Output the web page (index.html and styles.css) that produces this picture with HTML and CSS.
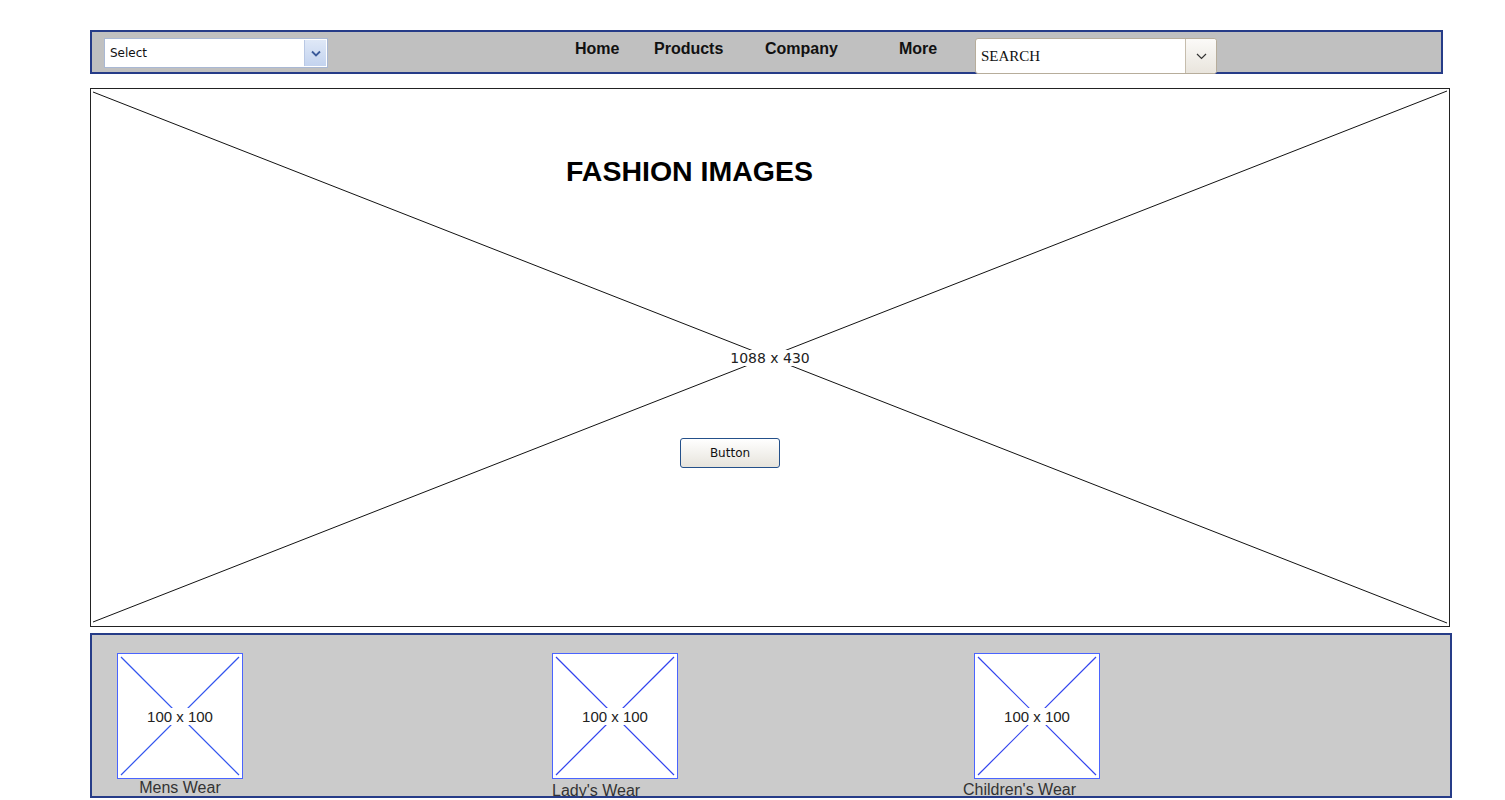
FILE: index.html
```html
<!DOCTYPE html>
<html lang="en">
<head>
    <meta charset="UTF-8">
    <meta name="viewport" content="width=device-width, initial-scale=1.0">
    <title>Fashion</title>
    <link rel="stylesheet" href="styles.css">
</head>
<body>

<div class="page">

    <div class="topbar">
        <div class="select">
            <span class="select-text">Select</span>
            <span class="select-btn">
                <svg width="10" height="7" viewBox="0 0 10 7"><path d="M1 1.5 L5 5.5 L9 1.5" fill="none" stroke="#3a5a9a" stroke-width="1.8"/></svg>
            </span>
        </div>
        <ul class="menu">
            <li class="menu-home">Home</li>
            <li class="menu-products">Products</li>
            <li class="menu-company">Company</li>
            <li class="menu-more">More</li>
        </ul>
        <div class="search">
            <span class="search-text">SEARCH</span>
            <span class="search-btn">
                <svg width="11" height="7" viewBox="0 0 11 7"><path d="M1 1 L5.5 5.5 L10 1" fill="none" stroke="#333" stroke-width="1.2"/></svg>
            </span>
        </div>
    </div>

    <div class="hero">
        <svg class="cross" viewBox="0 0 1358 537" preserveAspectRatio="none">
            <line x1="2" y1="3" x2="1356" y2="534" stroke="#111" stroke-width="1"/>
            <line x1="1356" y1="2" x2="2" y2="533" stroke="#111" stroke-width="1"/>
        </svg>
        <h1 class="hero-title">FASHION IMAGES</h1>
        <span class="hero-size">1088 x 430</span>
        <button class="hero-button">Button</button>
    </div>

    <div class="categories">
        <div class="cat cat-mens">
            <div class="thumb">
                <svg class="cross" viewBox="0 0 124 124" preserveAspectRatio="none">
                    <line x1="3" y1="3" x2="121" y2="121" stroke="#3355ee" stroke-width="1.2"/>
                    <line x1="121" y1="3" x2="3" y2="121" stroke="#3355ee" stroke-width="1.2"/>
                </svg>
                <span class="thumb-size">100 x 100</span>
            </div>
            <p class="cat-label">Mens Wear</p>
        </div>
        <div class="cat cat-lady">
            <div class="thumb">
                <svg class="cross" viewBox="0 0 124 124" preserveAspectRatio="none">
                    <line x1="3" y1="3" x2="121" y2="121" stroke="#3344ee" stroke-width="1.2"/>
                    <line x1="121" y1="3" x2="3" y2="121" stroke="#3344ee" stroke-width="1.2"/>
                </svg>
                <span class="thumb-size">100 x 100</span>
            </div>
            <p class="cat-label">Lady's Wear</p>
        </div>
        <div class="cat cat-kids">
            <div class="thumb">
                <svg class="cross" viewBox="0 0 124 124" preserveAspectRatio="none">
                    <line x1="3" y1="3" x2="121" y2="121" stroke="#3344ee" stroke-width="1.2"/>
                    <line x1="121" y1="3" x2="3" y2="121" stroke="#3344ee" stroke-width="1.2"/>
                </svg>
                <span class="thumb-size">100 x 100</span>
            </div>
            <p class="cat-label">Children's Wear</p>
        </div>
    </div>

</div>

</body>
</html>
```

FILE: styles.css
```css
body {
    margin: 0;
    background-color: #ffffff;
    font-family: "Liberation Sans", Arial, sans-serif;
    overflow: hidden;
}
.page {
    padding: 30px 0 0 90px;
    width: 1362px;
}

/* top bar */
.topbar {
    display: flex;
    align-items: flex-start;
    width: 1349px;
    height: 40px;
    background-color: #c0c0c0;
    border: 2px solid #263c88;
}
.select {
    display: flex;
    align-items: center;
    box-sizing: border-box;
    width: 224px;
    height: 30px;
    margin: 6px 0 0 12px;
    background: #fff;
    border: 1px solid #a9b8d4;
    padding: 1px;
}
.select-text {
    flex: 1;
    padding-left: 4px;
    font-family: "DejaVu Sans", Tahoma, sans-serif;
    font-size: 12px;
    color: #111;
}
.select-btn {
    display: flex;
    align-items: center;
    justify-content: center;
    width: 21px;
    height: 26px;
    background: linear-gradient(#dfe8f7, #c3d3ef);
    border-left: 1px solid #b9c8e4;
}
.menu {
    display: flex;
    list-style: none;
    margin: 8px 0 0 247px;
    padding: 0;
    font-size: 16px;
    font-weight: bold;
    color: #111;
}
.menu-home { width: 79px; }
.menu-products { width: 111px; }
.menu-company { width: 134px; }
.menu-more { width: 76px; }
.search {
    display: flex;
    box-sizing: border-box;
    width: 242px;
    height: 36px;
    margin-top: 6px;
    background: #fff;
    border: 1px solid #b7ad9b;
    border-radius: 3px;
}
.search-text {
    flex: 1;
    padding: 9px 0 0 5px;
    font-family: "Liberation Serif", "Times New Roman", serif;
    font-size: 15px;
    color: #111;
}
.search-btn {
    display: flex;
    align-items: center;
    justify-content: center;
    width: 30px;
    background: linear-gradient(#fbfaf8, #e9e5dd);
    border-left: 1px solid #c6bdad;
    border-radius: 0 3px 3px 0;
}

/* hero */
.hero {
    position: relative;
    display: flex;
    flex-direction: column;
    align-items: flex-start;
    width: 1358px;
    height: 537px;
    margin-top: 14px;
    border: 1px solid #222;
}
.cross {
    position: absolute;
    top: 0;
    left: 0;
    width: 100%;
    height: 100%;
}
.hero-title {
    position: relative;
    margin: 66px 0 0 475px;
    font-size: 28.5px;
    line-height: 32px;
    font-weight: bold;
    color: #000;
}
.hero-size {
    position: absolute;
    left: 50%;
    top: 50%;
    transform: translate(-50%, -50%);
    background: #fff;
    padding: 0 1px;
    font-family: "DejaVu Sans", Verdana, sans-serif;
    font-size: 14px;
    color: #222;
}
.hero-button {
    position: relative;
    margin: 251px 0 0 589px;
    width: 100px;
    height: 30px;
    background: linear-gradient(#ffffff, #e7e4dc);
    border: 1px solid #24508a;
    border-radius: 3px;
    font-family: "DejaVu Sans", Tahoma, sans-serif;
    font-size: 12px;
    color: #111;
}

/* categories */
.categories {
    display: flex;
    align-items: flex-start;
    width: 1358px;
    height: 161px;
    margin-top: 6px;
    background-color: #cbcbcb;
    border: 2px solid #263c88;
}
.cat {
    display: flex;
    flex-direction: column;
    margin-top: 18px;
}
.cat-mens { margin-left: 25px; align-items: center; }
.cat-lady { margin-left: 309px; }
.cat-kids { margin-left: 296px; }
.thumb {
    position: relative;
    display: flex;
    align-items: center;
    justify-content: center;
    width: 124px;
    height: 124px;
    background: #fff;
    border: 1px solid #4a64ff;
}
.thumb-size {
    position: relative;
    background: #fff;
    padding: 0 1px;
    font-size: 15px;
    color: #222;
}
.cat-label {
    margin: 0;
    font-size: 16px;
    line-height: 18px;
    color: #333;
}
.cat-lady .cat-label { margin-top: 3px; }
.cat-kids .cat-label { margin: 2px 0 0 -11px; }
```
